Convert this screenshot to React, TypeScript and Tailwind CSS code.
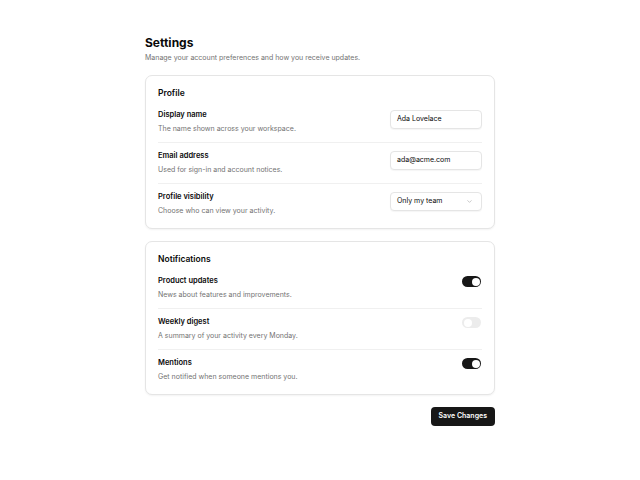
import { ChevronDown } from 'lucide-react'

const font = { fontFamily: 'Inter, "Noto Sans", sans-serif' }

function Row({ label, desc, children }: { label: string; desc: string; children: React.ReactNode }) {
  return (
    <div className="flex items-start justify-between py-2 first:pt-0 last:pb-0">
      <div>
        <div className="text-[7.5px] leading-[10px] font-semibold text-[#0a0a0a]">{label}</div>
        <div className="mt-1 text-[7px] leading-[10px] text-[#737373]">{desc}</div>
      </div>
      {children}
    </div>
  )
}

function Input({ value }: { value: string }) {
  return (
    <div className="flex h-[19px] w-[92px] items-center rounded-[4px] border border-[#e5e5e5] bg-white px-[6px] text-[7px] text-[#0a0a0a] shadow-[0_1px_1px_rgba(0,0,0,0.04)]">
      {value}
    </div>
  )
}

function Toggle({ on }: { on: boolean }) {
  return (
    <div
      className={
        on
          ? 'mr-px flex h-[11px] w-[19px] items-center justify-end rounded-full bg-[#171717] p-[1.5px]'
          : 'mr-px flex h-[11px] w-[19px] items-center justify-start rounded-full bg-[#ececec] p-[1.5px]'
      }
    >
      <div className="h-[8px] w-[8px] rounded-full bg-white" />
    </div>
  )
}

function Card({ title, children }: { title: string; children: React.ReactNode }) {
  return (
    <div className="rounded-[7px] border border-[#e5e5e5] bg-white px-3 pt-[11px] pb-3 shadow-[0_1px_2px_rgba(0,0,0,0.05)]">
      <h2 className="mb-[11px] text-[8.5px] leading-[12px] font-semibold text-[#0a0a0a]">{title}</h2>
      <div className="divide-y divide-[#f0f0f0]">{children}</div>
    </div>
  )
}

export default function App() {
  return (
    <div className="min-h-screen bg-white" style={font}>
      <div className="mx-auto w-[350px] pt-[35px]">
        <h1 className="text-[12px] leading-[16px] font-bold text-[#0a0a0a]">Settings</h1>
        <p className="mt-[2px] text-[7px] leading-[10px] text-[#737373]">
          Manage your account preferences and how you receive updates.
        </p>

        <div className="mt-[12px] space-y-3">
          <Card title="Profile">
            <Row label="Display name" desc="The name shown across your workspace.">
              <Input value="Ada Lovelace" />
            </Row>
            <Row label="Email address" desc="Used for sign-in and account notices.">
              <Input value="ada@acme.com" />
            </Row>
            <Row label="Profile visibility" desc="Choose who can view your activity.">
              <div className="flex h-[19px] w-[92px] items-center justify-between rounded-[4px] border border-[#e5e5e5] bg-white px-[6px] text-[7px] text-[#0a0a0a] shadow-[0_1px_1px_rgba(0,0,0,0.04)]">
                <span>Only my team</span>
                <ChevronDown className="mr-[2px] h-[7px] w-[7px] text-[#a3a3a3]" strokeWidth={2} />
              </div>
            </Row>
          </Card>

          <Card title="Notifications">
            <Row label="Product updates" desc="News about features and improvements.">
              <Toggle on />
            </Row>
            <Row label="Weekly digest" desc="A summary of your activity every Monday.">
              <Toggle on={false} />
            </Row>
            <Row label="Mentions" desc="Get notified when someone mentions you.">
              <Toggle on />
            </Row>
          </Card>
        </div>

        <div className="mt-3 flex justify-end">
          <button className="h-[19px] rounded-[4px] bg-[#171717] px-[8px] text-[7px] font-semibold text-white">
            Save Changes
          </button>
        </div>
      </div>
    </div>
  )
}
